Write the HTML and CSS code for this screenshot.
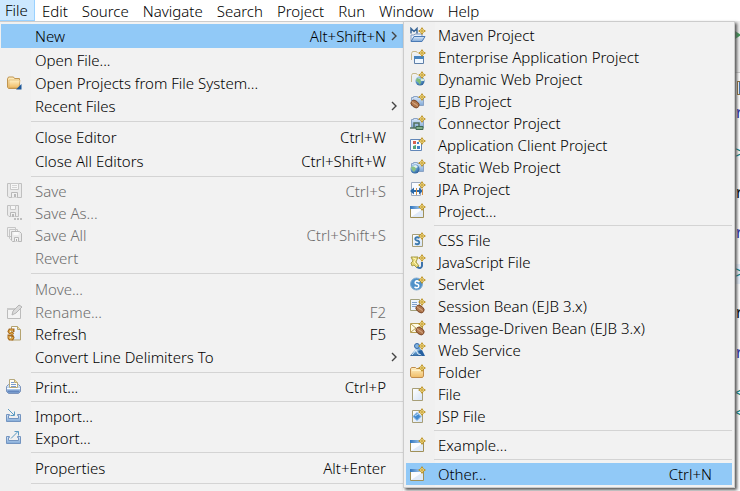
FILE: index.html
```html
<!DOCTYPE html>
<html lang="en">
<head>
<meta charset="utf-8">
<title>Workbench</title>
<link rel="stylesheet" href="styles.css">
</head>
<body>
<svg class="defs" aria-hidden="true">
  <defs>
    <linearGradient id="gold" x1="0" y1="0" x2="0" y2="1"><stop offset="0" stop-color="#fff0c4"/><stop offset="1" stop-color="#f0bd67"/></linearGradient>
    <linearGradient id="blue" x1="0" y1="0" x2="0" y2="1"><stop offset="0" stop-color="#dceafb"/><stop offset="1" stop-color="#7fa8d6"/></linearGradient>
    <linearGradient id="paper" x1="0" y1="0" x2="1" y2="1"><stop offset="0" stop-color="#fff"/><stop offset="1" stop-color="#d5e3f5"/></linearGradient>
    <linearGradient id="fade" x1="0" y1="0" x2="1" y2="0"><stop offset="0" stop-color="#2f74bd"/><stop offset="1" stop-color="#a9cbec"/></linearGradient>
    <radialGradient id="globe" cx=".35" cy=".3" r=".8"><stop offset="0" stop-color="#d7ecfa"/><stop offset=".5" stop-color="#5c96c9"/><stop offset="1" stop-color="#235791"/></radialGradient>
    <symbol id="star" viewBox="0 0 16 16"><path d="M12 0L13.500 2.500L16 4L13.500 5.500L12 8L10.500 5.500L8 4L10.500 2.500Z" fill="#b98d1c"/><path d="M11 2h2v4h-2zM10 3h4v2h-4z" fill="#fff3ac"/><path d="M11.500 1.500h1v5h-1zM9.500 3.500h5v1h-5z" fill="#c39a2c"/></symbol>
    <symbol id="bean" viewBox="0 0 16 16"><ellipse cx="5" cy="11" rx="4.500" ry="3.200" transform="rotate(38 5 11)" fill="#b0764c" stroke="#6e3a1d" stroke-width=".8"/><path d="M1.500 8.500c2 .5 2 2.500 3.500 2.500s2 1.500 3 2.500" fill="none" stroke="#e8c2a0" stroke-width=".8"/></symbol>
    <symbol id="tray" viewBox="0 0 16 16"><path d="M.5 6.500h3v1h-1v3h10v-3h-1v-1h3v7H.500z" fill="url(#blue)" stroke="#7394c0"/></symbol>
    <symbol id="window" viewBox="0 0 16 16"><path d="M.5 3.500h13v11H.5z" fill="#fbfcff" stroke="#a09058"/><path d="M1 14l12-8v8z" fill="#e0eaf8"/><path d="M0 3h11v3H0z" fill="url(#fade)"/><use href="#star"/></symbol>
    <symbol id="project" viewBox="0 0 16 16"><path d="M1.500 12.500v-8h2v-1h4v1h6v8z" fill="url(#blue)" stroke="#8ba3c4"/></symbol>
    <symbol id="folder-back" viewBox="0 0 16 16"><path d="M1.500 11V4.500l1-2h4l1 1.500" fill="none" stroke="#c6b88a"/><path d="M2 5h8v8H3z" fill="#e9eef3"/></symbol>
    <symbol id="page" viewBox="0 0 16 16"><path d="M2.500 2.500h10v12h-10z" fill="url(#paper)" stroke="#a79e76"/></symbol>
  </defs>
</svg>

<nav class="menubar" aria-label="Main menu">
  <button class="menubar-item open">File</button>
  <button class="menubar-item">Edit</button>
  <button class="menubar-item">Source</button>
  <button class="menubar-item">Navigate</button>
  <button class="menubar-item">Search</button>
  <button class="menubar-item">Project</button>
  <button class="menubar-item">Run</button>
  <button class="menubar-item">Window</button>
  <button class="menubar-item">Help</button>
</nav>

<main class="workbench">
  <div class="menu file-menu" role="menu" aria-label="File">
    <button class="row plain selected"><span class="icon"></span><span class="label">New</span><span class="key">Alt+Shift+N</span><svg class="chevron" viewBox="0 0 6 10"><path d="M1 1l4 4-4 4"/></svg></button>
    <button class="row plain"><span class="icon"></span><span class="label">Open File...</span></button>
    <button class="row"><svg class="icon" viewBox="0 0 16 16"><path d="M.5 12V4l1-2h5l1 1.500h5V12l-1 1.500h-10z" fill="url(#gold)" stroke="#c09550"/><path d="M2 5h11l-1 7.500H2z" fill="url(#gold)" stroke="#d5a860" stroke-width=".6"/><path d="M9 14.500h5.500V9z" fill="#1c5798"/></svg><span class="label">Open Projects from File System...</span></button>
    <button class="row plain"><span class="icon"></span><span class="label">Recent Files</span><svg class="chevron" viewBox="0 0 6 10"><path d="M1 1l4 4-4 4"/></svg></button>
    <hr>
    <button class="row plain"><span class="icon"></span><span class="label">Close Editor</span><span class="key">Ctrl+W</span></button>
    <button class="row plain"><span class="icon"></span><span class="label">Close All Editors</span><span class="key">Ctrl+Shift+W</span></button>
    <hr>
    <button class="row" disabled><svg class="icon" viewBox="0 0 16 16"><path d="M.5 .5h14v14H2l-1.500-1.500z" fill="#ebebeb" stroke="#c0c0c0"/><path d="M3.500 .5h8v6h-8z" fill="#f7f7f7" stroke="#c8c8c8"/><path d="M5 2.500h5M5 4.500h5" stroke="#d4d4d4"/><path d="M4.500 14.500v-5h6v5" fill="#f0f0f0" stroke="#b8b8b8"/><path d="M7 11h2v3H7z" fill="#b8b8b8"/></svg><span class="label">Save</span><span class="key">Ctrl+S</span></button>
    <button class="row" disabled><svg class="icon" viewBox="0 0 16 16"><path d="M.5 .5h11v11H2L.500 10z" fill="#ebebeb" stroke="#c0c0c0"/><path d="M3.500 .5h5v4h-5z" fill="#f7f7f7" stroke="#c8c8c8"/><path d="M3.500 11.500v-4h5v4" fill="#f0f0f0" stroke="#b8b8b8"/><path d="M5 9h2v3H5z" fill="#b8b8b8"/><path d="M7 13h2v2H7zM10 13h2v2h-2zM13 13h2v2h-2z" fill="#bebebe"/></svg><span class="label">Save As...</span></button>
    <button class="row" disabled><svg class="icon" viewBox="0 0 16 16"><path d="M.5 .5h8v9h-8zM2.500 2.500h8v10h-7l-1-1z" fill="#f0f0f0" stroke="#c6c6c6"/><path d="M4.500 4.500h8l2 2v8h-9l-1-1z" fill="#ebebeb" stroke="#b8b8b8"/><path d="M6.500 5h5v3h-5z" fill="#fafafa"/><path d="M7.500 14.500v-4h4v4" fill="#f5f5f5" stroke="#b8b8b8"/><path d="M9 12h1v2H9z" fill="#aaa"/></svg><span class="label">Save All</span><span class="key">Ctrl+Shift+S</span></button>
    <button class="row plain" disabled><span class="icon"></span><span class="label">Revert</span></button>
    <hr>
    <button class="row plain" disabled><span class="icon"></span><span class="label">Move...</span></button>
    <button class="row" disabled><svg class="icon" viewBox="0 0 16 16"><path d="M.5 4.500h13v10H.5z" fill="#f3f3f3" stroke="#bcbcbc"/><path d="M0 4h8v2H0z" fill="#cacaca"/><path d="M5 11l1-4 6-6 3 2-6 6z" fill="#dadada" stroke="#b4b4b4"/></svg><span class="label">Rename...</span><span class="key">F2</span></button>
    <button class="row"><svg class="icon" viewBox="0 0 16 16"><path d="M4.500 .5h6l3 3v10.500h-9z" fill="url(#paper)" stroke="#b4a370"/><path d="M10.500 .5v3h3" fill="#eedc9d" stroke="#b4a370"/><path d="M6.500 6V3.500h-4l-1 2 1 1.500h3l1 1M1.500 8.500V12l1 1.500h3l1-2-1-2h-3" fill="none" stroke="#a86c20" stroke-width="2"/><path d="M6 4H3L2 6l4 2M2 10v2l1 1h2l1-2" fill="none" stroke="#eab44e"/></svg><span class="label">Refresh</span><span class="key">F5</span></button>
    <button class="row plain"><span class="icon"></span><span class="label">Convert Line Delimiters To</span><svg class="chevron" viewBox="0 0 6 10"><path d="M1 1l4 4-4 4"/></svg></button>
    <hr>
    <button class="row"><svg class="icon wide" viewBox="0 0 16 16"><path d="M.5 7.500l2-2h10l2 2v5l-2 2h-10l-2-2z" fill="url(#blue)" stroke="#7d94bb"/><path d="M3.500 8.500v-8h5l3 3v5z" fill="#fffdf5" stroke="#b6a97d"/><path d="M8.500 .5v3h3" fill="#f2dfa0" stroke="#b6a97d"/><path d="M5 3.500h3M5 5.500h5M5 7.500h5" stroke="#789bd1"/><path d="M1 9.500h13" stroke="#fff"/><path d="M1.500 12.500h12" stroke="#6487bf" stroke-width="2"/></svg><span class="label">Print...</span><span class="key">Ctrl+P</span></button>
    <hr>
    <button class="row"><svg class="icon wide" viewBox="0 0 16 16"><use href="#tray"/><path d="M2 1l6 6M8.500 3.500v4H4.500" fill="none" stroke="#5b9ac2"/></svg><span class="label">Import...</span></button>
    <button class="row"><svg class="icon wide" viewBox="0 0 16 16"><use href="#tray"/><path d="M5 8.500l7-7M8.500 1.500h4V5.500" fill="none" stroke="#5b9ac2"/></svg><span class="label">Export...</span></button>
    <hr>
    <button class="row plain"><span class="icon"></span><span class="label">Properties</span><span class="key">Alt+Enter</span></button>
    <hr>
  </div>

  <div class="menu new-menu" role="menu" aria-label="New">
    <button class="row"><svg class="icon" viewBox="0 0 16 16"><path d="M1 14V8h3l1-1h7v3" fill="#e8f1fb" stroke="#829abf"/><path d="M1 14.500l3-5h11l-3 5z" fill="url(#blue)" stroke="#4a7ab5"/><path d="M1 6.500V1.500l3 3 3-3V6.500" fill="none" stroke="#3d6898" stroke-width="1.500"/><use href="#star"/></svg><span class="label">Maven Project</span></button>
    <button class="row"><svg class="icon" viewBox="0 0 16 16"><use href="#folder-back"/><path d="M4.500 7.500h9v7h-9z" fill="#eff7ff" stroke="#5e7fa8"/><path d="M4 7h10v3H4z" fill="#4784be"/><use href="#star"/></svg><span class="label">Enterprise Application Project</span></button>
    <button class="row"><svg class="icon" viewBox="0 0 16 16"><use href="#folder-back"/><circle cx="10" cy="10" r="4.500" fill="url(#globe)"/><path d="M7 7l3 1 1 3-1 3-2-3-2-1z" fill="#80bd77"/><path d="M11 7l3 1v2h-3z" fill="#d9edda"/><use href="#star"/></svg><span class="label">Dynamic Web Project</span></button>
    <button class="row"><svg class="icon" viewBox="0 0 16 16"><use href="#project"/><use href="#bean"/><use href="#star"/></svg><span class="label">EJB Project</span></button>
    <button class="row"><svg class="icon" viewBox="0 0 16 16"><use href="#project"/><path d="M4 13V8h5v6M0 13h6" fill="none" stroke="#51715f" stroke-width="1.500"/><path d="M6 11.500h7v3H6z" fill="#80ad8a" stroke="#3f6951"/><use href="#star"/></svg><span class="label">Connector Project</span></button>
    <button class="row"><svg class="icon" viewBox="0 0 16 16"><path d="M.5 2.500h11v11H.5z" fill="#f7fbff" stroke="#6186b8"/><path d="M3 4h3v3H3z" fill="#d86450"/><path d="M3 9l3-1v4H3z" fill="#53a579"/><path d="M7 9h3v3H7zM7 5h2v2H7z" fill="#3f83c4"/><use href="#star"/></svg><span class="label">Application Client Project</span></button>
    <button class="row"><svg class="icon" viewBox="0 0 16 16"><use href="#project"/><circle cx="5" cy="10" r="4.500" fill="url(#globe)"/><path d="M1 8l4-1 1 3-2 3-2-2z" fill="#8bc182"/><path d="M3 7l3-1 2 2-2 1z" fill="#e4f3ed"/><use href="#star"/></svg><span class="label">Static Web Project</span></button>
    <button class="row"><svg class="icon" viewBox="0 0 16 16"><path d="M1.500 1.500h9v13h-9z" fill="#f9fbff" stroke="#9caac0"/><path d="M4 6.500L0 10l4 3.500v-2.500h5v2.500L13 10 9 6.500V9H4z" fill="#2868aa"/><path d="M6.500 7v7M12.500 8v6" stroke="#d69245"/><use href="#star"/></svg><span class="label">JPA Project</span></button>
    <button class="row"><svg class="icon" viewBox="0 0 16 16"><use href="#window"/></svg><span class="label">Project...</span></button>
    <hr>
    <button class="row"><svg class="icon" viewBox="0 0 16 16"><use href="#page"/><path d="M9.500 6Q7 4.500 5.500 6q-1 2 1.500 2.500 3 .5 2 3Q7.500 13 5 11.500" fill="none" stroke="#3c79ad" stroke-width="1.800"/><use href="#star"/></svg><span class="label">CSS File</span></button>
    <button class="row"><svg class="icon" viewBox="0 0 16 16"><path d="M1 3h7l-2 5 3 4-2 2-3-3-2 1-1-3 2-2z" fill="#e6d776" stroke="#a79d49"/><path d="M3 4l3 1-2 3 3 3" fill="none" stroke="#fff7b7"/><path d="M7 13q4 2.500 5-1V8" fill="none" stroke="#3d73ac" stroke-width="2"/><use href="#star"/></svg><span class="label">JavaScript File</span></button>
    <button class="row"><svg class="icon" viewBox="0 0 16 16"><circle cx="6.500" cy="8" r="6" fill="#4f91c9" stroke="#82acd0"/><path d="M9.500 6Q7 4 5.500 5.500q-1 2 1 2.500 3 .5 2 3Q7 12.500 4.500 11" fill="none" stroke="#fff" stroke-width="1.500"/><use href="#star"/></svg><span class="label">Servlet</span></button>
    <button class="row"><svg class="icon" viewBox="0 0 16 16"><path d="M.5 1.500h9v11h-9z" fill="#edf5ff" stroke="#a3a27d"/><path d="M2 4.500h5M2 6.500h5M2 8.500h5" stroke="#80a2ce"/><use href="#bean" x="5"/><use href="#star"/></svg><span class="label">Session Bean (EJB 3.x)</span></button>
    <button class="row"><svg class="icon" viewBox="0 0 16 16"><path d="M.5 3.500h12v9H.5z" fill="#fffbe4" stroke="#b79f52"/><path d="M1 4l6 5 6-5M1 12l5-4" fill="none" stroke="#b79f52"/><use href="#bean" x="5"/><use href="#star"/></svg><span class="label">Message-Driven Bean (EJB 3.x)</span></button>
    <button class="row"><svg class="icon" viewBox="0 0 16 16"><path d="M0 14l4-5 3-5 3 2 4 8z" fill="url(#globe)"/><circle cx="7" cy="4" r="2.500" fill="#80b2df" stroke="#376aa9"/><path d="M2 13l4-5 2 4 4 1" fill="none" stroke="#e3f0fb"/><path d="M8 9l4 5h3L12 8z" fill="#2560a1"/><use href="#star"/></svg><span class="label">Web Service</span></button>
    <button class="row"><svg class="icon" viewBox="0 0 16 16"><path d="M.5 12V5l1-1.500h4l1 1h7V12l-1 1.500h-11z" fill="url(#gold)" stroke="#c08c4b"/><path d="M2 6.500h11" stroke="#fff3cb"/><use href="#star"/></svg><span class="label">Folder</span></button>
    <button class="row"><svg class="icon" viewBox="0 0 16 16"><use href="#page"/><use href="#star"/></svg><span class="label">File</span></button>
    <button class="row"><svg class="icon" viewBox="0 0 16 16"><use href="#page"/><path d="M7 4.500l4 4-4 4-4-4z" fill="#438bd0" stroke="#8ab7e3"/><path d="M5 8l3-2" stroke="#c4e0f8"/><use href="#star"/></svg><span class="label">JSP File</span></button>
    <hr>
    <button class="row"><svg class="icon" viewBox="0 0 16 16"><use href="#window"/></svg><span class="label">Example...</span></button>
    <hr>
    <button class="row selected"><svg class="icon" viewBox="0 0 16 16"><use href="#window"/></svg><span class="label">Other...</span><span class="key">Ctrl+N</span></button>
  </div>

  <section class="editor" aria-label="Editor">
    <div class="toolbar"><svg class="run" viewBox="0 0 6 8"><path d="M0 0l6 4-6 4z"/></svg></div>
    <div class="tabs"><span class="tab"></span></div>
    <pre class="code"><span class="word">r</span>

<span class="tag">&gt;</span>

r

<span class="word">r</span>

<span class="tag current">&gt;</span>

r

<span class="word">r</span>

<span class="tag">&lt;</span>
<span class="tag">&lt;</span></pre>
  </section>
</main>
</body>
</html>
```

FILE: styles.css
```css
* {
  box-sizing: border-box;
}

body {
  margin: 0;
  height: 100vh;
  display: flex;
  flex-direction: column;
  overflow: hidden;
  background: #fff;
  color: #000;
  font: 350 15px/20px "Noto Sans", "Open Sans", sans-serif;
}

button {
  margin: 0;
  border: 0;
  padding: 0;
  background: none;
  color: inherit;
  font: inherit;
  text-align: left;
}

.defs {
  position: absolute;
  width: 0;
  height: 0;
}

.menubar {
  display: flex;
  flex: none;
  height: 21px;
}

.menubar-item {
  padding: 0 7px;
  white-space: nowrap;
}

.menubar-item.open {
  padding: 0 6px 0 5px;
  border-right: 1px solid #99d1ff;
  border-bottom: 1px solid #99d1ff;
  background: #cce8ff;
}

.workbench {
  display: flex;
  flex: 1;
  align-items: flex-start;
  min-height: 0;
}

.menu {
  flex: none;
  border-top: 1px solid #ccc;
  padding-top: 2px;
  background: linear-gradient(90deg, #f0f0f0 31px, #f2f2f2 31px);
}

.file-menu {
  width: 403px;
  padding-left: 1px;
  padding-bottom: 8px;
}

.new-menu {
  position: relative;
  width: 332px;
  padding: 2px;
  border: 1px solid #ccc;
  box-shadow: 2px 2px 3px #555;
}

.row {
  display: flex;
  align-items: center;
  width: 100%;
  height: 22px;
}

.row.plain {
  height: 24px;
}

.row.selected {
  background: #91c9f7;
}

.row:disabled {
  color: #6d6d6d;
}

.icon {
  flex: none;
  width: 16px;
  height: 16px;
  margin: 0 12px 0 6px;
}

.icon.wide {
  margin: 0 13px 0 5px;
}

.new-menu .icon {
  margin: 0 12px 0 4px;
}

.label {
  flex: 1;
  white-space: nowrap;
}

.key {
  margin-right: 17px;
}

.new-menu .key {
  margin-right: 20px;
}

.chevron {
  width: 6px;
  height: 10px;
  margin-right: 6px;
  fill: none;
  stroke: #444;
  stroke-width: 1.4;
}

.key + .chevron {
  margin-left: -12px;
}

.menu hr {
  height: 7px;
  margin: 0 0 0 30px;
  border: 0;
  background: linear-gradient(#d4d4d4, #d4d4d4) 0 3px / 100% 1px no-repeat;
}

.new-menu hr {
  margin-left: 28px;
}

.editor {
  flex: 1;
  min-width: 0;
  overflow: hidden;
}

.toolbar {
  height: 52px;
  padding-top: 10px;
  border-bottom: 1px solid #ccc;
  background: #f0f0f0;
}

.run {
  display: block;
  width: 6px;
  height: 8px;
  fill: #3e9a57;
}

.tabs {
  height: 31px;
  padding: 8px 0 0 2px;
}

.tab {
  display: block;
  width: 14px;
  height: 14px;
  border: 1px solid #947238;
  background: linear-gradient(90deg, #fff 1px, #4773aa 1px);
}

.code {
  margin: 0;
  font: 16px/20px "Liberation Mono", monospace;
}

.word {
  color: #2a2aa5;
}

.tag {
  color: #008080;
}

.current {
  display: inline-block;
  background: #e8f2fe;
}
```
